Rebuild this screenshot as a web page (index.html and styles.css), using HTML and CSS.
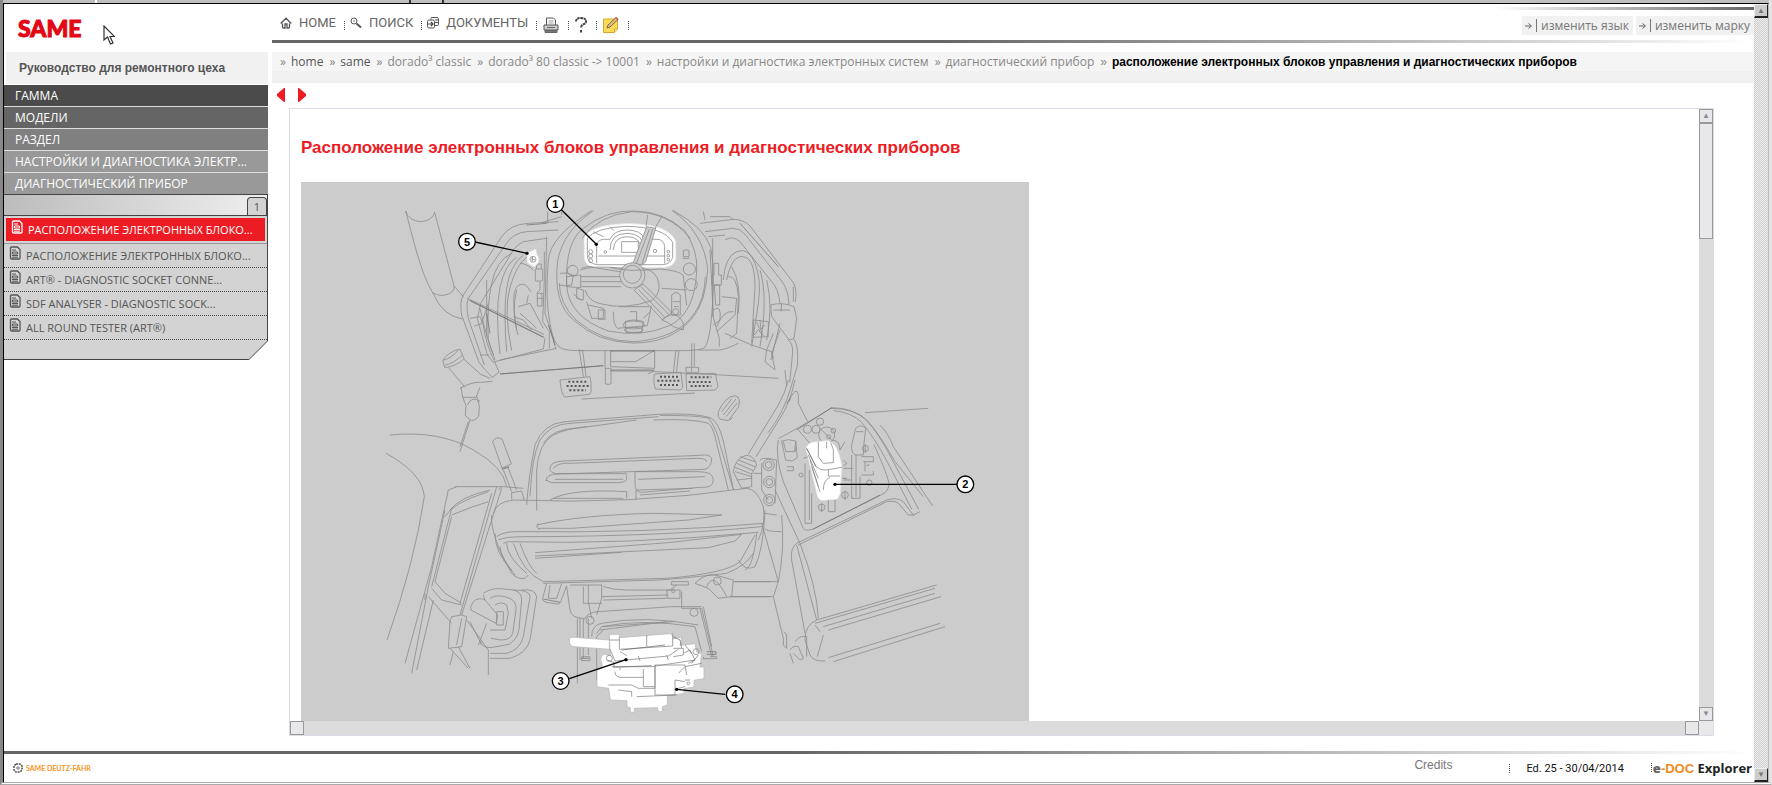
FILE: index.html
```html
<!DOCTYPE html>
<html lang="ru">
<head>
<meta charset="utf-8">
<title>e-DOC Explorer</title>
<link rel="stylesheet" href="styles.css">
</head>
<body>
<div class="frame">
<div class="strip"><i></i><i></i><i></i></div>
<div class="window">
<div class="page">
  <div class="columns">
    <aside class="side">
      <div class="brand"><span class="logo">SAME</span>
        <svg class="cursor" viewBox="0 0 12 20"><path d="M1 1v14l3.500-3 3 7 2.500-1-3-6.500h4.500z" fill="#fff" stroke="#333" stroke-width="1.200"/></svg>
      </div>
      <h2 class="manual">Руководство для ремонтного цеха</h2>
      <nav class="levels">
        <a class="l1" href="#">ГАММА</a>
        <a class="l2" href="#">МОДЕЛИ</a>
        <a class="l3" href="#">РАЗДЕЛ</a>
        <a class="l4" href="#">НАСТРОЙКИ И ДИАГНОСТИКА ЭЛЕКТР...</a>
        <a class="l4" href="#">ДИАГНОСТИЧЕСКИЙ ПРИБОР</a>
      </nav>
      <div class="tabs"><button class="tab">1</button></div>
      <svg class="defs"><symbol id="doc" viewBox="0 0 12 14"><path d="M2.500 1h6l2.500 2.500V12q0 1-1 1h-7q-1.500 0-1.500-1V2q0-1 1-1z" fill="none" stroke="currentColor" stroke-width="1.300"/><path d="M3 4h4M3 9.500h6M3 11.200h6M3.500 6h5v2h-5z" fill="none" stroke="currentColor"/></symbol></svg>
      <div class="docs">
        <a class="doc on" href="#"><svg><use href="#doc"/></svg>РАСПОЛОЖЕНИЕ ЭЛЕКТРОННЫХ БЛОКО...</a>
        <a class="doc" href="#"><svg><use href="#doc"/></svg>РАСПОЛОЖЕНИЕ ЭЛЕКТРОННЫХ БЛОКО...</a>
        <a class="doc" href="#"><svg><use href="#doc"/></svg>ART® - DIAGNOSTIC SOCKET CONNE...</a>
        <a class="doc" href="#"><svg><use href="#doc"/></svg>SDF ANALYSER - DIAGNOSTIC SOCK...</a>
        <a class="doc" href="#"><svg><use href="#doc"/></svg>ALL ROUND TESTER (ART®)</a>
      </div>
      <svg class="corner" viewBox="0 0 264 20" preserveAspectRatio="none"><path d="M0 0h263.500v1L245 19.500H0z" fill="#d3d3d3"/><path d="M263.500 0v1L245 19.500H0" fill="none" stroke="#444"/></svg>
    </aside>
    <main class="main">
      <header class="top">
        <nav class="tools">
          <a href="#"><svg class="i12" viewBox="0 0 12 12"><path d="M.7 6.500 6 1.200l5.300 5.300M2.500 6.500V10q0 1 1 1H5V7h2v4h1.500q1 0 1-1V6.500" fill="none" stroke="#555" stroke-width="1.300"/></svg>HOME</a>
          <a href="#"><svg class="i12" viewBox="0 0 12 12"><circle cx="4" cy="4" r="3" fill="none" stroke="#555"/><path d="M3 4h2" stroke="#777"/><path d="m6.500 6.500 4.500 4" stroke="#555" stroke-width="2"/></svg>ПОИСК</a>
          <a href="#"><svg class="i12" viewBox="0 0 12 12"><path d="M4 2.500V1.500q0-1 1-1h5q1.500 0 1.500 1v6q0 1-1 1H8M8 3h3M8 5.500h3" fill="none" stroke="#555"/><rect x=".5" y="3" width="7" height="8" rx="1.500" fill="#fff" stroke="#555"/><path d="M1 7h5M4 5l2 2-2 2" fill="none" stroke="#444" stroke-width="1.200"/></svg>ДОКУМЕНТЫ</a>
          <button class="tool" aria-label="Print"><svg viewBox="0 0 16 16"><path d="M3.500 8V1h7l2 2v5" fill="#fff" stroke="#555"/><path d="M5.500 4h5M5.500 6h5" stroke="#999"/><path d="M1 8h14v5H1z" fill="#ccc" stroke="#555"/><path d="M2 13.500h12v2H2zM4 10.500h8" fill="#777" stroke="#666"/></svg></button>
          <button class="tool" aria-label="Help"><svg class="help" viewBox="0 0 12 16"><path d="M1 4.500Q1 1 6 1t5 3.500Q11 6.500 8 7.500 6 8.500 6 11M6 13v2.500" fill="none" stroke="#444" stroke-width="2" stroke-dasharray="2.500 .6"/></svg></button>
          <button class="tool" aria-label="Notes"><svg viewBox="0 0 16 16"><path d="M.5 2h14v10l-3 3.500H.5z" fill="#fbdc55" stroke="#d7a52c"/><path d="M11.500 15.500V12h3" fill="#fff0a0" stroke="#d7a52c"/><path d="m4 11 1-3 8-7.500 2 2L7 10z" fill="#e7b873" stroke="#555" stroke-width=".8"/><path d="m12.500 1 1-.7L15.500 2l-1 1z" fill="#d54b35"/></svg></button>
        </nav>
        <div class="switches"><button><svg viewBox="0 0 8 8"><path d="M0 4h6M3.500 1.500 6.500 4l-3 2.500" fill="none" stroke="#666"/></svg><i></i>изменить язык</button><button><svg viewBox="0 0 8 8"><path d="M0 4h6M3.500 1.500 6.500 4l-3 2.500" fill="none" stroke="#666"/></svg><i></i>изменить марку</button></div>
      </header>
      <div class="rule"></div>
      <nav class="crumbs"><a href="#" class="dark">home</a><a href="#" class="dark">same</a><a href="#">dorado³ classic</a><a href="#">dorado³ 80 classic -&gt; 10001</a><a href="#">настройки и диагностика электронных систем</a><a href="#">диагностический прибор</a><strong>расположение электронных блоков управления и диагностических приборов</strong></nav>
      <div class="pager"><button aria-label="Назад"><svg viewBox="0 0 8 14"><path d="M8 0v14H7L0 8V6l7-6z"/></svg></button><button aria-label="Вперёд"><svg viewBox="0 0 8 14"><path d="M0 0v14h1l7-6V6L1 0z"/></svg></button></div>
      <section class="panel">
        <div class="sheet">
          <h1>Расположение электронных блоков управления и диагностических приборов</h1>
          <svg class="drawing" viewBox="0 0 2184 1617" role="img" aria-label="Место оператора">
            <g class="ln" transform="translate(237 -36)">
              <path d="M77 123Q85 152 122 155 158 152 164 127M77 123C98 200 122 310 158 368q22 14 48 4 18-8 16-24M164 127l58 221M158 368q30 70 89 79M222 348l28 32M268 390l225 112M262 385l230 108M300 415q20 90 40 140M345 575l145-38 5-32"/>
              <path d="M535 155l-90 5q-55 3-80 40L250 375q-12 20-5 60l52 142q15 20 40 45l20-15-10-25q-30-60-38-120M535 180l-95 5q-40 3-62 37L265 385q-8 20 0 60l48 140M500 205l-70 10q-20 10-30 25L302 400l-10 45 30 110 20 25M545 140l-60 18M503 125v35M545 125v10M270 445l30-5 8 20-25 8M300 555h28"/>
              <path d="M395 250q-45 20-60 90t-10 170l20 60M410 262q-35 20-50 90t0 200M430 255q-40 30-50 100t0 190M440 262q-30 20-50 90t5 190M460 300q-20-20-40-20M410 360q-15 60 0 120M452 365q-15-30-35-20t-15 70 12 80M415 410l35-10 40 75M420 430q30 25 50 45M440 400l5-25M400 440l30 10 25 30M320 330v170M325 400l-20 60"/>
              <rect x="466" y="297" width="22" height="36" rx="3"/><path d="M470 297v-15h14v15M480 335v25l-8 8v40h14v-38M470 370h20M470 385h20M493 245v80l-5 130 20 30v50M500 200l-5 230 20 60 12 45"/>
              <path class="w" d="m442 250 25-12 8 40-12 12-20-12z"/><circle class="w" cx="459" cy="268" r="17"/><circle cx="459" cy="268" r="9"/><path d="m452 265 14 5M458 260l-2 15"/>
              <path d="M635 122Q510 200 505 270q-10 120 5 190 10 65 35 76 20 6 50 6h315q50 0 65-10 15-20 22-120 8-110-5-180-20-60-112-110"/>
              <path d="M640 122q-90 60-107 150-15 130 50 180 70 65 175 67 115 0 175-70 45-50 50-150-10-110-107-178M595 540l15 2M955 540h60q20 0 60-20"/>
              <path class="w" d="M613 200q22-35 125-39 130 0 149 54v50q-5 26-35 27H645q-32-5-32-32z"/>
              <path d="M622 205q25-32 116-36 115 2 140 48v45q-5 20-30 22H650q-28-5-28-28zM650 280v-50q0-20 20-22h20q12-27 50-28 45 0 54 28h40q18 2 20 22v50M690 240q0-50 52-50 50 0 50 50M700 240q2-40 42-40 40 0 42 40M725 215h50v32h-50zM655 258h200M690 170l12 12M640 185l30 15"/>
              <circle cx="632" cy="245" r="6"/><circle cx="632" cy="258" r="6"/><circle cx="632" cy="272" r="6"/><circle cx="865" cy="245" r="4"/><circle cx="865" cy="257" r="4"/><circle cx="865" cy="269" r="4"/><circle cx="676" cy="246" r="4"/><circle cx="825" cy="243" r="5"/>
              <path d="M606 205q50-70 150-80 110 0 175 80M560 345q-5-130 50-170 70-55 150-52 90 0 155 60 40 60 35 120-5 130-85 165-80 35-180 15Q565 440 560 345M538 340q0 60 50 110 75 65 175 65 130-10 180-85 30-40 33-110"/>
              <path class="f" d="m800 170 27 5-30 100-10 10-28-5z"/><path d="m803 135-5 35M845 140l-20 35M808 178l-40 105M818 178l-32 105"/>
              <path class="f" d="m762 360 28-18 85 85-27 22z"/><path d="m775 358 80 85M783 350l82 82M845 450q30-25 50-10t15 40l-30-10q-15-15-35-20M560 350v-30l42-5v38zM602 320l120 0M604 350l120 0M604 335h125M605 295q20-10 50 0l78 12M540 310q20-5 40 5l-5 30q-20 5-38 0"/>
              <circle class="f" cx="757" cy="316" r="38"/><circle cx="757" cy="313" r="27"/>
              <path d="M615 360q10 35 50 42 70 18 150-10 25-20 22-50-5-40-50-48M600 300q40-15 130-5M690 292q50 15 150 5 60 5 70 20l10 90M845 355l75 5M580 372l25 20M590 355v30l20 5v-30zM620 395l15 50h35v-30l-45-10M655 420h20v28h-20zM700 425q0 40 12 50l90-8 12-60M735 455q25-10 55 0l-5 32h-46zM750 425h20v30M717 410h90M790 445l20-20"/>
              <ellipse cx="761" cy="465" rx="32" ry="12"/><ellipse cx="761" cy="480" rx="28" ry="8"/>
              <circle cx="928" cy="297" r="18"/><circle cx="934" cy="344" r="18"/><circle cx="578" cy="302" r="16"/><path d="M908 265h20M910 242q8-5 17 0v18h-17zM875 375q13-15 26 0v60h-26zM878 395h22M882 410h14"/><circle cx="887" cy="425" r="9"/>
              <path d="M960 160l100-12q30 0 50 20l130 170q12 20 6 58M975 185l85-10q20 0 35 18l110 140q20 25 22 70M985 200l50-5M1200 400q-5-45-25-65l-95-120q-20-20-45-5M970 125l5 25M998 205v230l20 70v25M990 240l10 200M1240 350v45M1060 150l-10-10h-60"/>
              <path d="M1030 330q5-70 40-85t55 35q20 50 10 120l-20 130M1040 330q15-75 50-70t35 90l-10 170M1055 290q30 50 20 140M1045 320q25-5 30 60l-5 110-20 15M1025 380l45 5-5 50-55 50M1010 470q20-50 50-45M1140 300q25 80 0 230M1160 330q20 80 0 180M1035 490l80 35 60 20 5 20"/>
              <path d="M1002 280h14v35h8v30h-28v-30h6zM1003 345h16v60h-12zM1000 420q25-20 20 30l-20 15M1120 450l45 5v45l-45 2zM1130 455l8 20-15 20M1155 465l-18 18 15 15M1140 450l5 50"/>
              <path d="M1172 405q35-10 70 5l8 35-8 60q-12 10-22-5l-45-60zM1180 420h50M1205 400l-2 25M1222 508q20 10 15 50l-8 80M1242 508q15 20 10 80l-18 60q-22 80-70 140M1200 460l-15 60-12 50M1180 490l-20 50-5 35 30 25-10-50 25-70M1215 600l5 50"/>
              <path d="M190 578q-5-10 15-25t35-15l12 28q-10 12-30 20t-28 6zM196 585q25-5 52-30M192 570q20-5 42-28M205 592l50 60M252 568l50 45 28 12M240 655q35-20 62-18l35-3M243 652l5 30 40 0 12-30M248 682l10 25-2 30 12 10q10 12 28-8l2-30-8-32M262 705q15-30 38-10M270 750l-30 95"/>
              <path d="M360 570l170-35M360 612l310-25M675 540v55M692 540v50l132 5v-55M692 575h75l58-35M598 540l12 80M608 540l10 80M888 540l-8 70M897 540l-8 70M935 520v85M943 520v70M676 595h17v46q-8 5-17 0zM692 603h132l-20 8M825 605l200 10 170 10M918 592h38v15h-38zM605 687l340-18"/>
              <path d="M540 630l90-10q5 20 3 45l-4 8-75 8q-10-8-14-51zM823 612l80-5 5 45-6 8-76-3q-8-20-3-45zM918 612l88-2 8 40-8 10-86 2z"/>
            </g>
            <g class="knobs" transform="translate(237 -36)"><path d="M565 635h60M560 648h68M568 661h50M840 620h60M832 632h66M840 645h56M932 622h62M926 636h70M932 648h62"/></g>
            <g class="dk" transform="translate(237 -36)"><path d="M692 543h132M692 600h130M360 612l310-25M270 392l220 110M440 165l60-5M1080 160l115 130M505 465l20 60M320 430l10 60"/></g>
            <g class="ln" transform="translate(1137 594)">
              <path d="M115 95q20-45 50-48 20 5 10 35l-30 40-25-5q-8-5-5-22zM125 95l30-38M130 105l38-48M138 110l35-42M150 120l8-8"/>
              <path d="M325 0q-10 40-30 75L205 222M345 0q-15 70-45 115l-72 115M325 65q25-50 30-20v25l28 55"/>
              <path d="M200 225q25 5 30 30l-15 25 0 40-30 5-25-50q5-40 40-50zM175 240l50 20M170 250l50 22M165 262l50 20M165 275l50 15M180 230l45 15M170 300l45-5"/>
              <path d="M220 280h25M240 240q10-10 50 0l-5 130M245 250v80l20 30M255 400l35 5"/><circle cx="266" cy="255" r="17"/><circle cx="266" cy="255" r="10"/><circle cx="268" cy="306" r="17"/><circle cx="268" cy="306" r="10"/><circle cx="268" cy="360" r="17"/><circle cx="268" cy="360" r="10"/>
              <path d="M296 175q60-30 160-92 60 0 100 35 40 40 80 120l80 150M460 92q55 5 85 35 38 45 75 115l75 145M450 85q80 0 115 40t80 120l85 105M600 135q25 25 40 65l118 178M555 98l190-13M295 180q-10 50 15 125l60 140q5 10 30 2l205-103q20-10 22-30 0-20-45-120M355 150l35 40"/>
              <path d="M285 330l75 160q50 130 55 225M350 490l270-130q30-10 50 5l30 40 20-10M355 495l265-130q30-5 40 10l25 30h20M350 490q-20 15-15 50l40 220M350 495l60 225M305 455q-50 0-50-10"/>
              <path d="M305 183q20-8 42 0l5 50-15 10-20-3zM310 185l8 30h25l5-30M320 260h20v12h-20M350 200l-5 15"/>
              <circle cx="382" cy="148" r="12"/><circle cx="408" cy="148" r="12"/><circle cx="420" cy="125" r="11"/><circle cx="440" cy="165" r="24"/><circle cx="446" cy="170" r="6"/><circle cx="460" cy="152" r="7"/><path d="M420 145l35 35M455 180q25 0 25 30l15-25M370 235l15-5M375 250v180h20v-90M388 270v150M445 320v75h20v-45M515 225v130h25v-65M528 225v125M515 195l12-50q15-15 30 0l-5 45 -2 35h-25q-12-8-10-30zM528 155h22M490 265h30M545 230h35v15h-30M545 285h35v-12M555 245v30M490 300h25M490 240l10 10-10 8"/>
              <circle cx="495" cy="345" r="10"/><circle cx="425" cy="382" r="10"/><circle cx="556" cy="205" r="9"/><circle cx="568" cy="308" r="8"/><circle cx="363" cy="285" r="6"/><path d="M495 332v28M425 370v26M556 193v26"/>
              <path class="w" d="M378 205q5-15 20-18l45-5q30 5 42 75l-5 85-8 15-42 4q-12 2-17-12z"/><path d="M380 205l28 55q15 12 30 10l48-8M385 225l30 70M390 240l25 80M395 260l20 60 5 15M415 185v45l15 20 30-2v-40l-8-20M440 185v20M445 270v18h35M430 330q0-30 20-38"/>
              <path d="M410 720l360-105M405 730l360-105M430 740l335-100M445 750l338-100M445 833l335-103M460 845l335-105M410 720q-35 15-35 60l15 45q10 20 45 18M430 765l-18 65M405 735l15 20"/>
              <path d="M245 430l50 175M280 650l30 125v20l10 10v-40l-8-10M305 405q10 100-10 200l-15 45M150 650h130M165 605h130M330 810q10-15 25-10l15 35-10 5-20-20M345 785q15-20 35-15v60M330 820l10 30"/>
            </g>
            <g class="dk" transform="translate(1137 594)"><path d="M350 150l105-67M380 205l28 55M488 295h12M560 257l8-3M600 345l-200 102M320 70l12-15"/></g>
            <g class="ln" transform="translate(207 654)">
              <path d="M60 105q150-15 250 45 90 50 100 110M48 160q110 60 115 130-30 200-112 430M295 65l-25 75"/>
              <path d="M368 125q10-18 28-8l28 75-28 12zM395 205l22-5M400 210l25 65M415 205l25 65M425 278l30-5 8 28M425 278v20"/>
              <path d="M470 315q5-80 25-180 25-65 90-70l280-22q110-5 155 10 25 10 40 70l30 145M480 290q5-120 30-170 30-48 90-50l265-20M500 332V210q5-80 50-105 40-20 100-25M850 60q120-5 165 10 15 10 25 60l35 140M870 46q110 0 145 8 25 30 35 80l40 135M520 130q30-45 100-45l180-25"/>
              <path d="M540 205q0-20 40-22l410-17q30-5 35 10 0 25-20 32L560 222q-22-5-20-17zM550 205q15-18 50-15l380-15q30 0 30 10M765 218q5 0 5 20-2 8-25 10H545q-20-10-17-5 0-20 35-22H765M555 238h205M795 215h190q45 0 45 25t-40 22l-175 15q-20 0-20-25zM805 238l200-8M540 300q60-35 230-25v20M550 295l210 0M798 300v-30l170-5M810 285l150-12"/>
              <path d="M370 340q10-35 60-40 350 15 700-35 30 0 50 55 8 50-15 100M365 345q-5 60 60 175 20 20 40 15l10-10M500 375q130-30 350-35l205 5M505 385h100l350-25 100-15M505 370q-10 15 5 18M380 410q20-15 60-15 400 5 740-25M385 420q20-10 80-10 400 0 710-30M400 430l15-5q350 10 750-28M495 458l400-30 220-25-20 20-80 20-520 25M495 475l260-18M375 400q0 60 50 110M430 430q30 90 90 115l370-10q180-15 220-50l45-80M390 440q0 30 45 85M450 430q25 70 50 90M410 430q0 40 60 90M1160 400q-10 100-35 110M1105 480q20 35 50 20 25-50 30-170M520 550l350-10q120-10 200-20 60-25 80-60"/>
              <path d="M255 260h145l60 5M235 270l25-10M235 270l-50 230-80 290M240 330q30-40 120-60M245 345q60-25 110-40M225 350q20-40 130-75M175 560l50-230M195 545l50-195M185 560l60-235M195 545l30 35 50 30M185 565l30 35 60 15M175 590l70 80M380 260l-110 385M395 265l-120 380M365 280l-95 330M385 270l10-10M175 560l-50 260M190 600l-50 210M165 580v20M240 665l5-15 30-5 15 5-15 90-40 5zM290 660l65 90v75M240 745l55 60M265 740l35 65M250 755l-10 40M275 655l-15 80M300 665l35 70"/>
              <path d="M310 605q15-15 35-5l38 45-5 25-75-40q-5-10 7-25zM380 635h20v40h-20zM340 580q25-20 70-12 45 0 45 30l-8 90q-5 30-30 45l-55 10q-30 0-30-20M360 595q20-15 60 0 20 10 18 35l-10 70q-5 20-35 20l-30-5M375 615q20-12 35 0l5 25-10 50-45 0M455 570q40-5 45 20l-20 130q-10 40-60 55h-60M430 570q50 0 50 20l-20 120q-10 40-50 50h-50M345 600l-5-15M350 670l-25 65"/>
              <path d="M530 550l-12 45q0 10 10 12l35 5q10 0 12-15l15-40M540 555l-5 40h25l15-45M590 560l10 70q5 25 40 25M600 555h95v40l-15 50M640 560v50h55M655 555v50l10 50M700 560q30 10 70 10h130l20-15M695 590l200-5M700 600l190-5M890 570h40v25h-38zM905 545h50v10h-50zM975 550q30-30 60-25l55 15-5 50-40 5-30-30zM1010 560q20-50 60 30M1090 545h110M1085 590h115M935 575v50h60l35 145M995 620h-90l-220 15q-30 0-45 25M640 655v120M630 655v125M622 655v195M655 655v110M680 700l15-20q120-25 280 0l20 75M665 710q0-35 30-40 130-25 290 5M680 840V710l20-20M690 690l200-25M700 680l210-15M990 625l35 145M1000 620l25 120M1020 770h20v6h-40v-6M635 770h25v12h-25z"/>
              <circle cx="972" cy="637" r="12"/><circle cx="660" cy="661" r="12"/><circle cx="1042" cy="543" r="12"/><circle cx="910" cy="573" r="5"/>
              <path class="w b" d="M598 720q0-10 15-8l105 8v28l-105-8q-15 0-15-20z"/><path class="w b" d="M718 703h30v10l150-12q10 0 12 15l25-5-5 25 45-5 5 25 15 5-5 40 12 0v35l-30 5v20l-30 5v15l-50 5v30l-15 4v15h-12l-2-12-70 2v12h-12v-14l-10-3v-18l-50-2-5-35-35-5v-50l15-5v-15q-10-15 5-28l20 5z"/>
              <path d="M748 713v35l160-10v-38M830 705v35M718 720h30M720 748l15 35 160-15 30-20M725 800h120l130-20M750 755l20 12M735 815q0 15 15 17h70v-25M715 855h70l20 10h50v-70h90l5 30M750 810v-8M820 830v30h35M745 870l40 5v15M800 890l120-5M855 795v90h60v-45l30 5M925 820l20-20 50-10M910 745h30v20l-30 5M940 760l20-10 15 30-20 10M805 768l5 15M890 765l5 15M960 840h-15M925 865l20-5"/>
              <circle cx="718" cy="775" r="9"/><circle cx="978" cy="755" r="9"/><circle cx="955" cy="850" r="4"/>
            </g>
            <g class="dk" transform="translate(207 654)"><path d="M755 750l130-15M730 802l115-5M910 710l20 10 5 25M945 735l20 25M965 790l20-25M395 208l22-6M520 597l50 10M712 780l20 8v12M1010 755h28v8h-28M635 775h22"/></g>
            <g class="call">
              <path d="m782 84 104 103M522 180l156 34M1600 907h368M805 1490l170-57M1127 1522l145 15"/>
              <g class="dot"><circle cx="886" cy="187" r="5"/><circle cx="678" cy="214" r="5"/><circle cx="1602" cy="907" r="5"/><circle cx="975" cy="1433" r="5"/><circle cx="1127" cy="1522" r="5"/></g>
              <g class="ring"><circle cx="763" cy="66" r="25"/><circle cx="498" cy="179" r="25"/><circle cx="1993" cy="907" r="25"/><circle cx="779" cy="1497" r="25"/><circle cx="1301" cy="1537" r="25"/></g>
              <g class="num"><text x="763" y="78">1</text><text x="498" y="191">5</text><text x="1993" y="919">2</text><text x="779" y="1509">3</text><text x="1301" y="1549">4</text></g>
            </g>
          </svg>
        </div>
        <div class="vbar"><span class="btn">▴</span><span class="thumb"></span><span class="track"></span><span class="btn">▾</span></div>
        <div class="hbar"><span class="btn"></span><span class="track"></span><span class="btn"></span></div>
        <div class="nook"></div>
      </section>
    </main>
  </div>
  <div class="rule foot-rule"></div>
  <footer class="foot">
    <span class="maker"><svg viewBox="0 0 10 10"><path d="M3 1h4l2 2v4L7 9H3L1 7V3z" fill="none" stroke="#555" stroke-width="1.600" stroke-dasharray="2 .8"/><path d="M3 5h4M5 3v4" stroke="#777"/></svg>SAME DEUTZ-FAHR</span>
    <a class="credits" href="#">Credits</a>
    <span class="edition">Ed. 25 - 30/04/2014</span>
    <span class="product"><b class="e">e</b><b class="d">-DOC</b> Explorer</span>
  </footer>
</div>
<div class="outer"><span>▴</span><span>▾</span></div>
</div>
</div>
</body>
</html>
```
FILE: styles.css
```css
* { box-sizing: border-box; }
body { margin: 0; font-family: "Liberation Sans", Arial, sans-serif; background: #fff; color: #555; }
a { color: inherit; text-decoration: none; }
button { border: 0; padding: 0; background: none; font: inherit; color: inherit; display: flex; align-items: center; }
svg { display: block; }
.defs { position: absolute; width: 0; height: 0; }
.frame { height: 100vh; display: flex; flex-direction: column; background: #fff; border-left: 3px solid #888; border-right: 3px solid #e4e4e4; border-bottom: 3px double #aaa; }
.strip { height: 3px; background: #c0c0c0; display: flex; flex: none; }
.strip i { width: 2px; background: #fff; margin-left: 92px; }
.strip i + i { background: #333; margin-left: 312px; }
.strip i + i + i { margin-left: 31px; }
.window { flex: 1; min-height: 0; display: flex; border-top: 1px solid #000; border-left: 1px solid #000; border-right: 1px solid #bbb; }
.page { flex: 1; min-width: 0; display: flex; flex-direction: column; }
.columns { flex: 1; min-height: 0; display: flex; gap: 4px; }
.side { width: 264px; flex: none; }
.brand { height: 48px; display: flex; align-items: center; padding-left: 14px; }
.logo { width: 62px; font: 900 23px Lato, "Liberation Sans", sans-serif; color: #e30613; -webkit-text-stroke: 1px #e30613; }
.cursor { width: 12px; height: 20px; margin: 14px 0 0 23px; }
.manual { margin: 0 0 1px 2px; height: 32px; background: #f1f1f1; padding-left: 13px; font-size: 12px; line-height: 32px; color: #555; }
.levels { display: grid; gap: 1px; background: #ddd; font: 12px/21px "Open Sans", sans-serif; color: #fff; }
.levels a { padding-left: 11px; white-space: nowrap; overflow: hidden; }
.l1 { background: #4b4b4b; }
.l2 { background: #656565; }
.l3 { background: #808080; }
.l4 { background: #999; }
.tabs { height: 22px; border: 1px solid #444; border-left: 0; background: linear-gradient(90deg, #bcbcbc, #efefef); display: flex; justify-content: flex-end; align-items: flex-end; }
.tab { width: 20px; height: 18px; justify-content: center; background: #d3d3d3; border: 1px solid #444; border-bottom: 0; border-radius: 4px 4px 0 0; font: 11px "Open Sans", sans-serif; }
.docs { background: #d3d3d3; border-right: 1px solid #444; padding-top: 1px; font: 11px/23px "Open Sans", sans-serif; }
.doc { display: flex; height: 24px; padding-left: 5px; gap: 5px; border-bottom: 1px dotted #444; white-space: nowrap; color: #555; }
.doc svg { width: 12px; height: 14px; margin-top: 2px; flex: none; }
.doc.on { height: 26px; background: #ed1c24; color: #fff; border: 2px solid #d3d3d3; border-top-width: 1px; box-shadow: 0 1px #999; margin-bottom: 1px; }
.corner { width: 100%; height: 20px; }
.main { flex: 1; min-width: 0; display: flex; flex-direction: column; }
.top { height: 36px; display: flex; justify-content: space-between; align-items: flex-start; background: linear-gradient(90deg, #fff, #666) right 3px / 260px 3px no-repeat; flex: none; }
.tools { display: flex; padding: 8px 0 0 8px; font: 13px/18px Roboto, sans-serif; color: #666; }
.tools > * { display: flex; align-items: center; gap: 7px; padding-right: 9px; margin-right: 5px; background: repeating-linear-gradient(#456 0 1px, #fff 1px 2px) right 9px / 1px 10px no-repeat; height: 24px; }
.tools > a { padding-bottom: 2px; }
.tools .tool { padding: 0 10px 0 1px; }
.i12 { width: 12px; height: 12px; }
.tool svg { width: 16px; height: 16px; margin-top: 2px; }
.tool .help { width: 12px; }
.switches { display: flex; gap: 3px; padding-top: 12px; font: 12px/18px "Open Sans", sans-serif; color: #777; }
.switches button { height: 19px; padding: 0 4px 0 3px; background: #f1f1f1; }
.switches svg { width: 8px; height: 8px; }
.switches i { width: 1px; height: 13px; background: #777; margin: 0 4px 0 3px; }
.rule { height: 3px; flex: none; background: linear-gradient(90deg, #666 45%, #fff); }
.crumbs { flex: none; margin-top: 9px; height: 31px; padding: 1px 0 0 7px; display: flex; background: linear-gradient(#f5f5f5 19px, #f0f0f0 19px); font: 12px/18px "Open Sans", sans-serif; color: #888; white-space: nowrap; }
.crumbs > *::before { content: "»"; margin: 0 5px 0 1px; font-weight: normal; color: #888; }
.crumbs > * { padding-right: 5px; }
.crumbs .dark { color: #555; }
.crumbs strong { font: bold 12px/18px "Liberation Sans", sans-serif; color: #000; }
.pager { flex: none; height: 25px; display: flex; gap: 13px; padding: 5px 0 0 5px; align-items: flex-start; }
.pager svg { width: 8px; height: 14px; fill: #ed1c24; }
.panel { flex: 1; min-height: 0; margin: 0 40px 15px 17px; border: 1px solid #dcdce6; display: grid; grid-template: minmax(0, 1fr) 14px / minmax(0, 1fr) 14px; }
.sheet { overflow: hidden; padding-left: 11px; }
.sheet h1 { margin: 29px 0 24px; font-size: 17px; line-height: 20px; color: #ed1c24; white-space: nowrap; }
.drawing { width: 728px; height: 539px; background: #ccc; }
.ln, .dk, .knobs { fill: none; stroke: #8c8c8c; stroke-width: 2.4; }
.dk { stroke: #666; stroke-width: 2; }
.knobs { stroke: #555; stroke-width: 6; stroke-dasharray: 6 6; }
.ln .w { fill: #fff; stroke: #eee; }
.ln .b { stroke: #bbb; }
.ln .f { fill: #ccc; }
.call path { stroke: #000; stroke-width: 4; }
.ring { fill: #fff; stroke: #000; stroke-width: 4; }
.num { font: bold 33px "Liberation Sans", sans-serif; text-anchor: middle; fill: #000; }
.vbar { display: flex; flex-direction: column; }
.hbar { display: flex; }
.track { flex: 1; background: #dcdcdc; }
.btn { width: 14px; height: 14px; flex: none; border: 1px solid #999; background: #e8e8ea; font: 9px/11px "DejaVu Sans", sans-serif; text-align: center; color: #888; }
.thumb { height: 116px; border: 1px solid #999; background: #e8e8ea; }
.nook { background: #e8e8ea; }
.foot { height: 28px; flex: none; display: flex; align-items: center; padding: 0 2px 0 9px; font-size: 12px; }
.maker { display: flex; gap: 3px; align-items: center; margin-right: auto; color: #f7941d; font: bold 7px Lato, sans-serif; }
.maker svg { width: 10px; height: 10px; }
.credits { margin: 0 57px 7px 0; color: #777; }
.edition { color: #111; font: 11px Roboto, sans-serif; padding: 0 27px 0 17px; background: repeating-linear-gradient(#456 0 1px, #fff 1px 2px) left 2px / 1px 10px no-repeat; }
.product { padding: 0 0 0 2px; font: bold 13px "Open Sans", sans-serif; color: #222; background: repeating-linear-gradient(#456 0 1px, #fff 1px 2px) left 4px / 1px 10px no-repeat; white-space: nowrap; }
.product .e { color: #666; }
.product .d { color: #f08a1d; font-family: "Liberation Sans", sans-serif; }
.outer { width: 14px; flex: none; display: flex; flex-direction: column; justify-content: space-between; background: repeating-conic-gradient(#cfcfcf 0 25%, #ececec 0 50%) 0 0 / 2px 2px; }
.outer span { height: 14px; background: #ccc; border: 1px solid #eee; border-right-color: #222; border-bottom: 2px solid #222; font: 9px/11px "DejaVu Sans", sans-serif; text-align: center; color: #777; }
```
